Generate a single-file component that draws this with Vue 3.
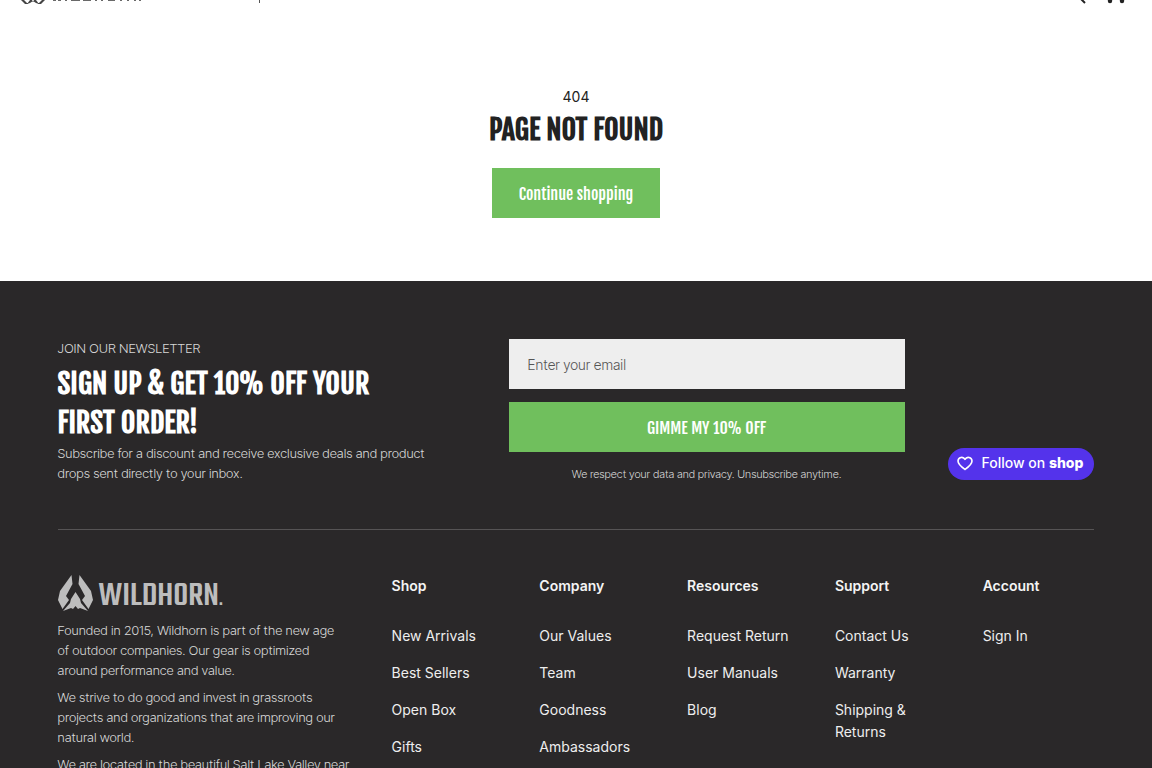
<script setup>
const columns = [
  { title: 'Shop', links: ['New Arrivals', 'Best Sellers', 'Open Box', 'Gifts'] },
  { title: 'Company', links: ['Our Values', 'Team', 'Goodness', 'Ambassadors'] },
  { title: 'Resources', links: ['Request Return', 'User Manuals', 'Blog'] },
  { title: 'Support', links: ['Contact Us', 'Warranty', 'Shipping & Returns'] },
  { title: 'Account', links: ['Sign In'] },
]
</script>

<template>
  <div class="page">
    <header class="topbar">
      <a href="#" class="top-logo" aria-label="Home">
        <svg width="124" height="5" viewBox="0 0 124 5" fill="#444" aria-hidden="true">
          <path d="M0 0h3l4 4-3 0zM24 0h-3l-4 4 3 0zM6 4l3-4h2l1 2 1-2h2l3 4-3-1-3-2-3 2z" />
          <path d="M32 0h3v1h-3zM37 0h3v1h-3zM44 0h2v1h-2zM50 0h9v1h-9zM62 0h8v1h-8zM74 0h2v1h-2zM80 0h2v1h-2zM87 0h7v1h-7zM99 0h2v1h-2zM106 0h2v1h-2zM113 0h2v1h-2zM118 0h2v1h-2z" opacity=".8" />
        </svg>
      </a>
      <svg class="top-rule" width="2" height="5" viewBox="0 0 2 5" aria-hidden="true"><path d="M0 0h1v3H0z" fill="#555" /></svg>
      <div class="top-icons">
        <a href="#" aria-label="Search"><svg width="20" height="5" viewBox="0 0 20 5" aria-hidden="true"><path d="M12-2l5 5" stroke="#222" stroke-width="2" /></svg></a>
        <a href="#" aria-label="Cart"><svg width="24" height="5" viewBox="0 0 24 5" aria-hidden="true"><circle cx="6" cy="1" r="2.2" fill="#222" /><circle cx="18" cy="1" r="2.2" fill="#222" /></svg></a>
      </div>
    </header>

    <main class="notfound">
      <p class="code">404</p>
      <h1>PAGE NOT FOUND</h1>
      <a href="#" class="btn">Continue shopping</a>
    </main>

    <footer>
      <section class="newsletter">
        <div class="pitch">
          <p class="eyebrow">JOIN OUR NEWSLETTER</p>
          <h2>SIGN UP &amp; GET 10% OFF YOUR FIRST ORDER!</h2>
          <p>Subscribe for a discount and receive exclusive deals and product drops sent directly to your inbox.</p>
        </div>
        <form class="signup" @submit.prevent>
          <input type="email" placeholder="Enter your email" aria-label="Enter your email" />
          <button type="submit" class="btn">GIMME MY 10% OFF</button>
          <p>We respect your data and privacy. Unsubscribe anytime.</p>
        </form>
        <button type="button" class="follow">
          <svg width="16" height="15" viewBox="0 0 16 15" fill="none" stroke="#fff" stroke-width="1.6" stroke-linejoin="round" aria-hidden="true"><path d="M8 13.500C5 11.300 1 8.400 1 5a3.700 3.700 0 0 1 7-1.600A3.700 3.700 0 0 1 15 5c0 3.400-4 6.300-7 8.500z" /></svg>
          <span>Follow on <b>shop</b></span>
        </button>
      </section>

      <section class="links">
        <div class="about">
          <a href="#" class="brand">
            <svg width="35" height="36" viewBox="0 0 35 36" fill="#bdbdbd" aria-hidden="true">
              <path d="M13.500 0L14.500 9 8 21l3 4-6.500 9L0 25l2-9z" />
              <path d="M21.500 0L20.500 9l6.500 12-3 4 6.500 9L35 25l-2-9z" />
              <path d="M17.500 17l4.500 7 1 4 7 8-8-3-2 1-2.500-3-2.500 3-2-1-8 3 7-8 1-4z" />
            </svg>
            <span>WILDHORN<small>.</small></span>
          </a>
          <p>Founded in 2015, Wildhorn is part of the new age of outdoor companies. Our gear is optimized around performance and value.</p>
          <p>We strive to do good and invest in grassroots projects and organizations that are improving our natural world.</p>
          <p class="place">We are located in the beautiful Salt Lake Valley near</p>
        </div>
        <nav v-for="col in columns" :key="col.title" :aria-label="col.title">
          <h3>{{ col.title }}</h3>
          <ul>
            <li v-for="link in col.links" :key="link"><a href="#">{{ link }}</a></li>
          </ul>
        </nav>
      </section>
    </footer>
  </div>
</template>

<style>
body { margin: 0; background: #fff; }
</style>

<style scoped>
* { box-sizing: border-box; }
h1, h2, h3, p, ul { margin: 0; padding: 0; }
a { color: inherit; text-decoration: none; }
svg { display: block; flex: none; }
.page { height: 100vh; overflow: hidden; font-family: Inter, sans-serif; color: #222; }
.topbar { display: flex; height: 5px; padding: 0 24px 0 21px; overflow: hidden; }
.top-rule { margin-left: 114px; }
.top-icons { display: flex; gap: 16px; margin-left: auto; }
.notfound { display: flex; flex-direction: column; align-items: center; padding: 81px 24px 63px; }
.code { font-size: 14px; line-height: 22px; }
h1, h2 { font: 700 28px/40px "Fjalla One", Oswald, sans-serif; }
.notfound h1 { padding-top: 2px; }
.btn { display: block; border: 0; background: #70bf5d; color: #fff; font: 400 16px/48px "Fjalla One", Oswald, sans-serif; padding: 2px 27px 0; text-align: center; }
.notfound .btn { margin-top: 18px; }
footer { background: #2a2829; color: #d8d8d8; padding: 58px 5% 0; }
.newsletter { display: grid; grid-template-columns: 451px minmax(0, 396px) 1fr; padding-bottom: 46px; border-bottom: 1px solid #565455; }
.pitch { padding-right: 80px; }
.pitch p, .about p { font: 300 13px/20px "Inter Tight", Roboto, sans-serif; }
.pitch .eyebrow { line-height: 18px; }
.pitch h2 { color: #fff; line-height: 39px; padding: 7px 0 1px; }
.signup { display: flex; flex-direction: column; gap: 13px; }
.signup input { height: 50px; border: 0; border-radius: 0; padding: 0 19px; background: #eee; color: #333; font: 300 14px/20px "Inter Tight", Roboto, sans-serif; }
.signup input::placeholder { color: #555; }
.signup p { font: 300 11px/18px "Inter Tight", Roboto, sans-serif; text-align: center; }
.follow { align-self: end; justify-self: end; display: flex; align-items: center; gap: 8px; height: 32px; margin-bottom: 3px; padding: 0 11px 2px 9px; border: 0; border-radius: 16px; background: #5433eb; color: #fff; font: 500 14px/20px Inter, sans-serif; }
.follow b { font-weight: 800; }
.links { display: grid; grid-template-columns: 298px repeat(5, 1fr); gap: 36px; padding-top: 45px; }
.about { padding-right: 8px; }
.about .place { white-space: nowrap; }
.brand { display: flex; align-items: center; gap: 6px; height: 36px; margin-bottom: 9px; color: #bdbdbd; }
.brand span { font: 500 35px/42px Teko, sans-serif; padding-top: 12px; }
.brand small { font-size: 20px; }
.about p + p { margin-top: 7px; }
nav h3 { color: #f4f4f4; font-size: 14px; font-weight: 600; line-height: 22px; margin-bottom: 28px; }
nav ul { list-style: none; display: flex; flex-direction: column; gap: 15px; }
nav li { font-size: 14px; line-height: 22px; color: #eee; }
</style>
